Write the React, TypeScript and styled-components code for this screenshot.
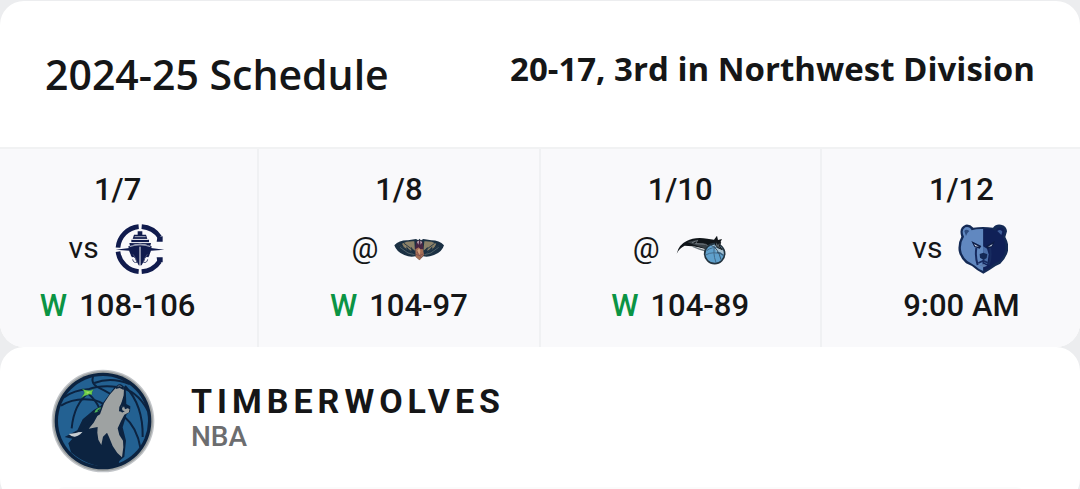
import React from "react";
import styled, { createGlobalStyle } from "styled-components";

const GlobalStyle = createGlobalStyle`
  *, *::before, *::after { box-sizing: border-box; }
  html { min-height: 100%; background: #ecedef; }
  body {
    margin: 0;
    color: #151617;
    font-family: Roboto, "Liberation Sans", sans-serif;
    overflow-x: hidden;
  }
  h1, h2, p { margin: 0; }
`;

const Page = styled.main`
  display: flex;
  flex-direction: column;
  padding-top: 1px;
`;

const Card = styled.section`
  background: #fff;
  border-radius: 24px;
  overflow: hidden;
`;

const CardHeader = styled.header`
  display: flex;
  justify-content: space-between;
  align-items: flex-start;
  padding: 43px 45px 43px;
  border-bottom: 2px solid #f1f2f3;
`;

const Title = styled.h1`
  font: 600 41px/60px "Open Sans", "Noto Sans", sans-serif;
`;

const Standing = styled.p`
  font: 700 33px/50px "Open Sans", "Noto Sans", sans-serif;
`;

const GameStrip = styled.div`
  display: grid;
  grid-template-columns: repeat(4, 1fr);
  margin: 0 -23px 0 -22px;
  background: #f9f9fb;
`;

const Game = styled.article`
  display: flex;
  flex-direction: column;
  align-items: center;
  padding: 21px 0;
  border-right: 2px solid #f0f1f3;
`;

const GameText = styled.p`
  font-size: 31px;
  font-weight: 500;
  line-height: 40px;
`;

const Win = styled.span`
  margin-right: 12px;
  color: #0b9444;
`;

const Opponent = styled.div`
  display: flex;
  align-items: center;
  gap: 16px;
  height: 50px;
  margin: 14px 0 12px;
  padding-right: 2px;
  font-size: 30px;
  line-height: 40px;
`;

const Site = styled.span`
  padding-bottom: 2px;
`;

const OpponentLogo = styled.svg`
  width: 50px;
  height: 50px;
`;

const TeamHeader = styled.header`
  display: flex;
  align-items: center;
  gap: 36px;
  padding: 22px 51px 14px;
`;

const TeamLogo = styled.svg`
  width: 104px;
  height: 104px;
`;

const TeamText = styled.div`
  padding-bottom: 7px;
`;

const TeamName = styled.h2`
  font-size: 34px;
  font-weight: 700;
  line-height: 38px;
  letter-spacing: 5px;
`;

const League = styled.p`
  color: #6c6d6f;
  font-size: 28px;
  font-weight: 500;
  line-height: 33px;
`;

const Panel = styled.div`
  height: 16px;
  margin: 0 56px;
  border-top: 2px solid #fbfbfb;
  border-radius: 16px;
`;

function Clippers() {
  return (
    <OpponentLogo viewBox="45 27 150 150" role="img" aria-label="Clippers">
      <g fill="none" stroke="#101b4d" strokeWidth="14">
        <path d="M116 35A69 69 0 0 0 54 98" />
        <path d="M54 110A69 69 0 0 0 116 170" />
        <path d="M125 35Q160 38 179 66" />
        <path d="M125 170Q160 167 179 139" />
      </g>
      <path d="M170 80L172 66L188 64V80ZM170 127H188V142L172 141Z" fill="#101b4d" />
      <path d="M47 104L88 99V107ZM193 104L153 99V107Z" fill="#101b4d" />
      <g fill="#101b4d">
        <path d="M113 49H127V59H138L142 72H98L102 59H113Z" />
        <path d="M94 74H147V82H94ZM88 84H153L151 93Q120 80 90 93Z" />
        <path d="M85 94Q120 81 155 94Q154 111 145 127Q136 122 132 137L125 151H116L109 137Q104 123 96 127Q86 111 85 94Z" />
      </g>
      <g fill="none" stroke="#f8f9fb" strokeWidth="2">
        <path d="M104 65H137M97 73H144M94 83H148M89 95Q120 84 151 95" />
        <path d="M120 95V150" strokeWidth="3" />
      </g>
      <g fill="none" stroke="#4a5277" strokeWidth="3">
        <path d="M99 118L108 132M142 118L133 132" />
        <path d="M98 133Q100 145 111 142L107 132M143 133Q141 145 130 142L134 132" />
      </g>
    </OpponentLogo>
  );
}

function Pelicans() {
  return (
    <OpponentLogo viewBox="42 27 150 150" role="img" aria-label="Pelicans">
      <path d="M43 91Q58 75 84 76L108 72L115 76L118 71L123 76L130 72L154 76Q178 76 192 91Q186 112 162 120Q143 128 130 124L118 135L106 124Q90 128 73 120Q50 112 43 91Z" fill="#1b3043" />
      <path d="M66 86Q80 78 103 79L105 107Q98 103 93 95L94 108Q85 103 79 94L80 104Q71 98 66 86Z" fill="#8b8168" />
      <path d="M169 86Q155 78 133 79L130 107Q137 103 143 95L142 108Q151 103 157 94L156 104Q164 98 169 86Z" fill="#8b8168" />
      <path d="M57 91L89 107L100 119M72 85L99 105M178 91L148 107L136 119M164 85L137 105M81 112L101 122M157 112L135 122" fill="none" stroke="#293b49" strokeWidth="3" />
      <path d="M60 97L84 114L104 119M176 97L152 114L133 119" fill="none" stroke="#667779" strokeWidth="2" />
      <path d="M109 81L118 75L128 81L130 101L118 113L105 101Z" fill="#472543" />
      <path d="M111 80L117 77L115 89ZM121 77L126 81L122 89Z" fill="#d1c2cb" />
      <path d="M106 103L116 97L119 102L129 103L132 119L119 136L107 126Z" fill="#a66f55" />
      <path d="M113 106L118 99L121 108L118 126Z" fill="#d1a17f" />
      <path d="M107 118Q118 126 130 117M111 111L124 129" fill="none" stroke="#74464b" strokeWidth="2" />
    </OpponentLogo>
  );
}

function Magic() {
  return (
    <OpponentLogo viewBox="48 27 150 150" role="img" aria-label="Magic">
      <path d="M50 116Q56 89 80 78Q104 65 142 71L162 74L171 62L174 75L186 72L179 86L186 101L164 91L139 103L111 96L96 94L74 92Q58 99 50 116Z" fill="#101519" />
      <path d="M82 81L109 75L101 85L129 84L146 93L140 102L102 89Z" fill="#394147" />
      <path d="M96 83L113 76L107 86L137 88L147 94" fill="none" stroke="#8e969b" strokeWidth="2" />
      <path d="M98 94L118 102L134 107L142 96" fill="none" stroke="#6e797f" strokeWidth="4" />
      <circle cx="164" cy="116" r="30" fill="#5fa0cc" stroke="#24343f" strokeWidth="5" />
      <path d="M165 89A27 27 0 0 1 191 119Q180 108 170 110Q166 98 154 92Z" fill="#a9c3d2" />
      <path d="M140 107Q155 94 183 99M137 120Q158 107 191 119M165 91Q157 111 168 143" fill="none" stroke="#436b8b" strokeWidth="3" />
      <path d="M153 91Q174 98 183 134M171 112Q181 111 190 122" fill="none" stroke="#36536a" strokeWidth="3" />
      <path d="M166 90L168 78L173 88L182 82L178 94L187 104L174 98Z" fill="#59646a" stroke="#101519" strokeWidth="3" />
    </OpponentLogo>
  );
}

function Grizzlies() {
  return (
    <OpponentLogo viewBox="42 27 150 150" role="img" aria-label="Grizzlies">
      <path d="M65 29Q78 27 88 38Q117 34 147 38Q156 26 171 29Q188 32 189 49L184 66Q197 90 191 111Q186 129 169 146Q151 153 138 164L118 176L99 165Q84 151 66 145Q48 128 44 108Q41 84 52 65Q43 37 65 29Z" fill="#142a55" />
      <path d="M64 37Q76 33 83 46Q98 41 118 42V168Q104 163 93 152Q80 144 70 138Q53 123 51 104Q49 82 60 65Q50 45 64 37Z" fill="#6188c0" />
      <path d="M118 42Q142 40 154 47Q163 33 176 39Q186 48 176 64Q187 83 184 103Q181 124 166 139Q144 148 137 158L118 168Z" fill="#102057" />
      <path d="M61 48Q66 40 76 48Q69 53 66 63Z" fill="#2d4b7d" />
      <path d="M160 48Q170 41 175 50L172 60Z" fill="#405f9a" />
      <path d="M82 78L112 93L107 101L91 96ZM153 78L125 94L131 101L145 95Z" fill="#0e1d46" />
      <path d="M90 87L105 95L94 94ZM146 87L132 95L142 94Z" fill="#cbd4e4" />
      <path d="M97 99Q93 124 101 150M138 99Q143 125 134 150" fill="none" stroke="#172b60" strokeWidth="6" />
      <path d="M117 94L129 101L134 118L130 148L118 142Z" fill="#4b6ea8" />
      <path d="M107 117L118 113L130 118L128 129L119 135L108 128Z" fill="#142956" />
      <path d="M103 144L118 137L133 144M118 134V149" fill="none" stroke="#172b60" strokeWidth="5" />
      <path d="M105 151L120 147L130 152L119 157Z" fill="#5d7cad" />
    </OpponentLogo>
  );
}

function Timberwolves() {
  return (
    <TeamLogo viewBox="34 27 312 312" role="img" aria-label="Timberwolves">
      <circle cx="190" cy="183" r="154" fill="#c2c5c9" />
      <circle cx="190" cy="183" r="150" fill="#9ea2a2" />
      <circle cx="190" cy="183" r="145" fill="#0c2340" />
      <circle cx="190" cy="183" r="135" fill="#236192" />
      <g fill="none" stroke="#0c2340" strokeWidth="6">
        <path d="M160 50Q154 69 171 80Q194 91 218 105" />
        <path d="M164 69Q213 49 270 72M73 112Q104 90 145 88Q182 75 233 81Q291 89 324 151" />
        <path d="M64 137Q103 112 157 119Q182 123 197 137" />
        <path d="M147 99Q103 131 96 205M146 101Q169 120 179 145" />
        <path d="M256 78Q311 135 309 231M254 170Q292 202 302 263" />
      </g>
      <path d="M75 231L113 211L129 178L162 150L183 138L225 81L240 75L258 82L260 132L272 139L271 155L261 163L249 202L259 242L254 290L239 303L235 318Q158 332 94 277L86 250L98 236L84 233Z" fill="#0c2340" />
      <path d="M230 82Q232 76 240 75Q251 78 253 86L252 106L245 130L239 141L238 154L249 156L269 148L268 157L254 164L244 183L234 205L239 225L250 242L251 262L247 292L233 279L219 258L208 231L202 218L190 230L185 255L176 239L173 218L174 201L147 206L162 188L173 168L181 163L193 130L210 104Z" fill="#9ea2a2" />
      <path d="M228 87Q229 72 243 73Q256 79 252 90L240 84Z" fill="#0c2340" />
      <path d="M234 79Q240 75 246 80" fill="none" stroke="#61768a" strokeWidth="3" />
      <path d="M247 125L259 140L267 139L270 147L260 149L247 158L242 148Z" fill="#0c2340" />
      <path d="M246 136L249 145L253 139L256 148L264 145L270 148L258 155L248 151Z" fill="#9ea2a2" />
      <path d="M87 222Q110 221 133 209Q124 225 106 230Q96 231 87 222Z" fill="#c7cdd1" />
      <path d="M110 217Q147 197 167 158Q156 195 139 215Z" fill="#0c2340" />
      <path d="M164 158Q169 144 184 142Q182 151 176 155Z" fill="#4caf58" />
      <path d="M172 154L181 145L178 155Z" fill="#0c2340" />
      <path d="M127 86Q138 91 144 91Q153 93 162 88Q155 96 157 105Q149 101 144 105Q135 106 124 114Q133 103 134 99Q135 93 127 86Z" fill="#6fd04a" stroke="#175447" strokeWidth="1" />
      <path d="M139 95L151 95L144 101Z" fill="#a5dd5f" />
    </TeamLogo>
  );
}

interface GameData {
  date: string;
  site: "vs" | "@";
  Logo: () => React.JSX.Element;
  result: string;
  won?: boolean;
}

const games: GameData[] = [
  { date: "1/7", site: "vs", Logo: Clippers, result: "108-106", won: true },
  { date: "1/8", site: "@", Logo: Pelicans, result: "104-97", won: true },
  { date: "1/10", site: "@", Logo: Magic, result: "104-89", won: true },
  { date: "1/12", site: "vs", Logo: Grizzlies, result: "9:00 AM" },
];

export default function App() {
  return (
    <>
      <GlobalStyle />
      <Page>
        <Card>
          <CardHeader>
            <Title>2024-25 Schedule</Title>
            <Standing>20-17, 3rd in Northwest Division</Standing>
          </CardHeader>
          <GameStrip>
            {games.map(({ date, site, Logo, result, won }) => (
              <Game key={date}>
                <GameText>{date}</GameText>
                <Opponent>
                  <Site>{site}</Site>
                  <Logo />
                </Opponent>
                <GameText>
                  {won && <Win>W</Win>}
                  {result}
                </GameText>
              </Game>
            ))}
          </GameStrip>
        </Card>
        <Card>
          <TeamHeader>
            <Timberwolves />
            <TeamText>
              <TeamName>TIMBERWOLVES</TeamName>
              <League>NBA</League>
            </TeamText>
          </TeamHeader>
          <Panel />
        </Card>
      </Page>
    </>
  );
}
